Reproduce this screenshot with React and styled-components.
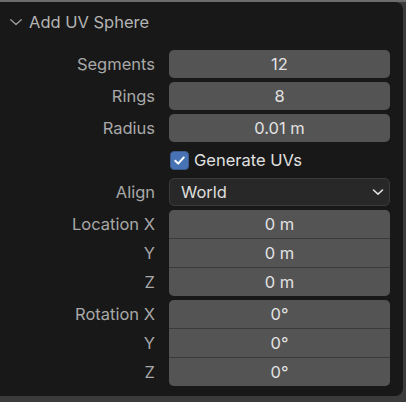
import React from "react";
import styled, { createGlobalStyle } from "styled-components";

const Global = createGlobalStyle`
  html, body { margin: 0; padding: 0; }
  body {
    background: #3d3d3d;
    font-family: Inter, "Noto Sans", sans-serif;
    width: 406px;
    height: 402px;
    overflow: hidden;
  }
`;

const Viewport = styled.div`
  width: 406px;
  height: 402px;
  border-top: 2px solid #6c6c6c;
  box-sizing: border-box;
  background: #3b3b3b;
`;

const Panel = styled.div`
  width: 403px;
  height: 394px;
  background: #181818;
  border-radius: 0 8px 8px 0;
  box-sizing: border-box;
  display: flex;
  flex-direction: column;
`;

const Header = styled.div`
  height: 40px;
  display: flex;
  align-items: center;
  padding-left: 9px;
  gap: 6px;
  color: #b4b4b4;
  font-size: 16.5px;
`;

const Body = styled.div`
  display: grid;
  grid-template-columns: 155px 221px;
  column-gap: 14px;
  row-gap: 4px;
  padding-top: 8px;
`;

const Label = styled.div`
  height: ${(p) => p.$h || 28}px;
  display: flex;
  align-items: center;
  justify-content: flex-end;
  color: #a8a8a8;
  font-size: 16.5px;
`;

const LabelStack = styled.div`
  display: flex;
  flex-direction: column;
  gap: 1px;
`;

const Field = styled.div`
  height: 28px;
  background: #545454;
  border-radius: 5px;
  display: flex;
  align-items: center;
  justify-content: center;
  color: #e2e2e2;
  font-size: 16.5px;
`;

const Group = styled.div`
  display: flex;
  flex-direction: column;
  gap: 1px;
  background: #3a3a3a;
  border-radius: 5px;
  overflow: hidden;
`;

const GroupCell = styled.div`
  height: 28px;
  background: #545454;
  display: flex;
  align-items: center;
  justify-content: center;
  color: #e2e2e2;
  font-size: 16.5px;
`;

const CheckRow = styled.div`
  height: 28px;
  display: flex;
  align-items: center;
  gap: 5px;
  color: #e0e0e0;
  font-size: 16.5px;
`;

const Box = styled.div`
  width: 19px;
  height: 19px;
  margin-left: 1px;
  border-radius: 4px;
  background: #4772b3;
  border: 1px solid #3b5a8c;
  box-sizing: border-box;
  display: flex;
  align-items: center;
  justify-content: center;
`;

const Select = styled.div`
  height: 28px;
  background: #282828;
  border: 1px solid #3a3a3a;
  box-sizing: border-box;
  border-radius: 5px;
  display: flex;
  align-items: center;
  justify-content: space-between;
  padding: 0 5px 0 11px;
  color: #dedede;
  font-size: 16.5px;
`;

const Chevron = ({ size = 12, color = "#b4b4b4", w = 1.4 }) => (
  <svg width={size} height={size} viewBox="0 0 12 12">
    <path d="M1.5 4 L6 8.2 L10.5 4" fill="none" stroke={color} strokeWidth={w} strokeLinecap="round" strokeLinejoin="round" />
  </svg>
);

const groups = [
  { labels: ["Location X", "Y", "Z"], values: ["0 m", "0 m", "0 m"] },
  { labels: ["Rotation X", "Y", "Z"], values: ["0°", "0°", "0°"] },
];

export default function App() {
  return (
    <>
      <Global />
      <Viewport>
        <Panel>
          <Header>
            <Chevron size={14} color="#9a9a9a" w={1.2} />
            <span>Add UV Sphere</span>
          </Header>
          <Body>
            <Label>Segments</Label>
            <Field>12</Field>
            <Label>Rings</Label>
            <Field>8</Field>
            <Label>Radius</Label>
            <Field>0.01 m</Field>
            <div />
            <CheckRow>
              <Box>
                <svg width="13" height="13" viewBox="0 0 13 13">
                  <path d="M2.3 6.8 L5.2 9.6 L10.8 3.4" fill="none" stroke="#ffffff" strokeWidth="2" strokeLinecap="round" strokeLinejoin="round" />
                </svg>
              </Box>
              <span>Generate UVs</span>
            </CheckRow>
            <Label>Align</Label>
            <Select>
              <span>World</span>
              <Chevron size={12} color="#e0e0e0" w={1.6} />
            </Select>
            {groups.map((g) => (
              <React.Fragment key={g.labels[0]}>
                <LabelStack>
                  {g.labels.map((l, i) => (
                    <Label key={i}>{l}</Label>
                  ))}
                </LabelStack>
                <Group>
                  {g.values.map((v, i) => (
                    <GroupCell key={i}>{v}</GroupCell>
                  ))}
                </Group>
              </React.Fragment>
            ))}
          </Body>
        </Panel>
      </Viewport>
    </>
  );
}
